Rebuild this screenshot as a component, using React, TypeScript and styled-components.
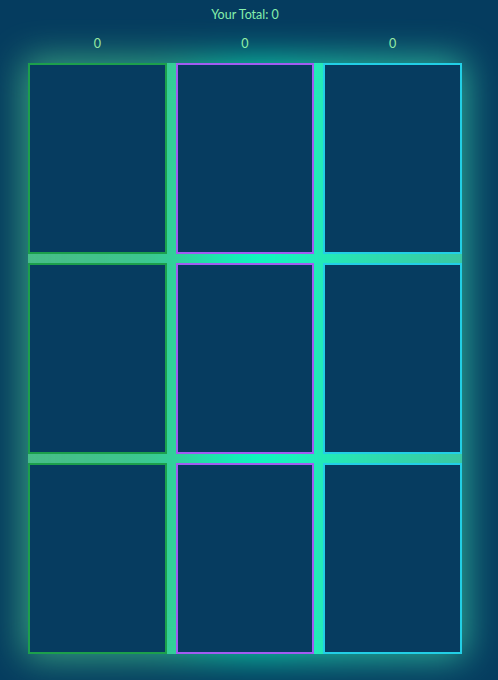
import React from "react";
import styled, { createGlobalStyle } from "styled-components";

const Global = createGlobalStyle`
  html, body {
    margin: 0;
    padding: 0;
    background: #053c5f;
  }
  body {
    font-family: "Lato", "Open Sans", sans-serif;
    overflow: hidden;
  }
`;

const Page = styled.div`
  width: 498px;
  height: 680px;
  box-sizing: border-box;
  padding: 7px 36px 0 28px;
  background: #053c5f;
`;

const Title = styled.div`
  text-align: center;
  font-size: 12.5px;
  line-height: 16px;
  color: #86efac;
  margin-bottom: 13px;
`;

const Headers = styled.div`
  display: grid;
  grid-template-columns: repeat(3, 1fr);
  column-gap: 9px;
  margin-bottom: 11px;
`;

const Header = styled.div`
  text-align: center;
  font-size: 12.5px;
  line-height: 16px;
  color: #a6efa4;
`;

const Board = styled.div`
  position: relative;
  isolation: isolate;
  display: grid;
  width: 434px;
  grid-template-columns: repeat(3, 1fr);
  grid-template-rows: repeat(3, 191px);
  gap: 9px;

  &::before,
  &::after {
    content: "";
    position: absolute;
    z-index: -1;
    background: linear-gradient(
      90deg,
      #48bd88 0%,
      #3ec68f 30%,
      #0cf8c0 52%,
      #1ff0bc 62%,
      #2ee0b2 75%,
      #3ac7a2 100%
    );
  }
  &::before {
    inset: 0;
  }
  &::after {
    inset: -4px;
    filter: blur(18px);
    opacity: 0.8;
  }
`;

const Overlay = styled.div`
  position: absolute;
  inset: 0;
  z-index: -1;
  background: radial-gradient(
    ellipse 45% 60% at 52% 55%,
    rgba(0, 255, 196, 0.55) 0%,
    rgba(0, 255, 196, 0) 100%
  );
`;

const Cell = styled.div<{ $edge: string }>`
  background: #063c60;
  border: 2px solid ${(p) => p.$edge};
  box-sizing: border-box;
`;

const edges = ["#1c9f4c", "#a25cf2", "#22cfe6"];

export default function App() {
  const totals = [0, 0, 0];
  return (
    <Page>
      <Global />
      <Title>Your Total: 0</Title>
      <Headers>
        {totals.map((t, i) => (
          <Header key={i}>{t}</Header>
        ))}
      </Headers>
      <Board>
        <Overlay />
        {Array.from({ length: 9 }).map((_, i) => (
          <Cell key={i} $edge={edges[i % 3]} />
        ))}
      </Board>
    </Page>
  );
}
